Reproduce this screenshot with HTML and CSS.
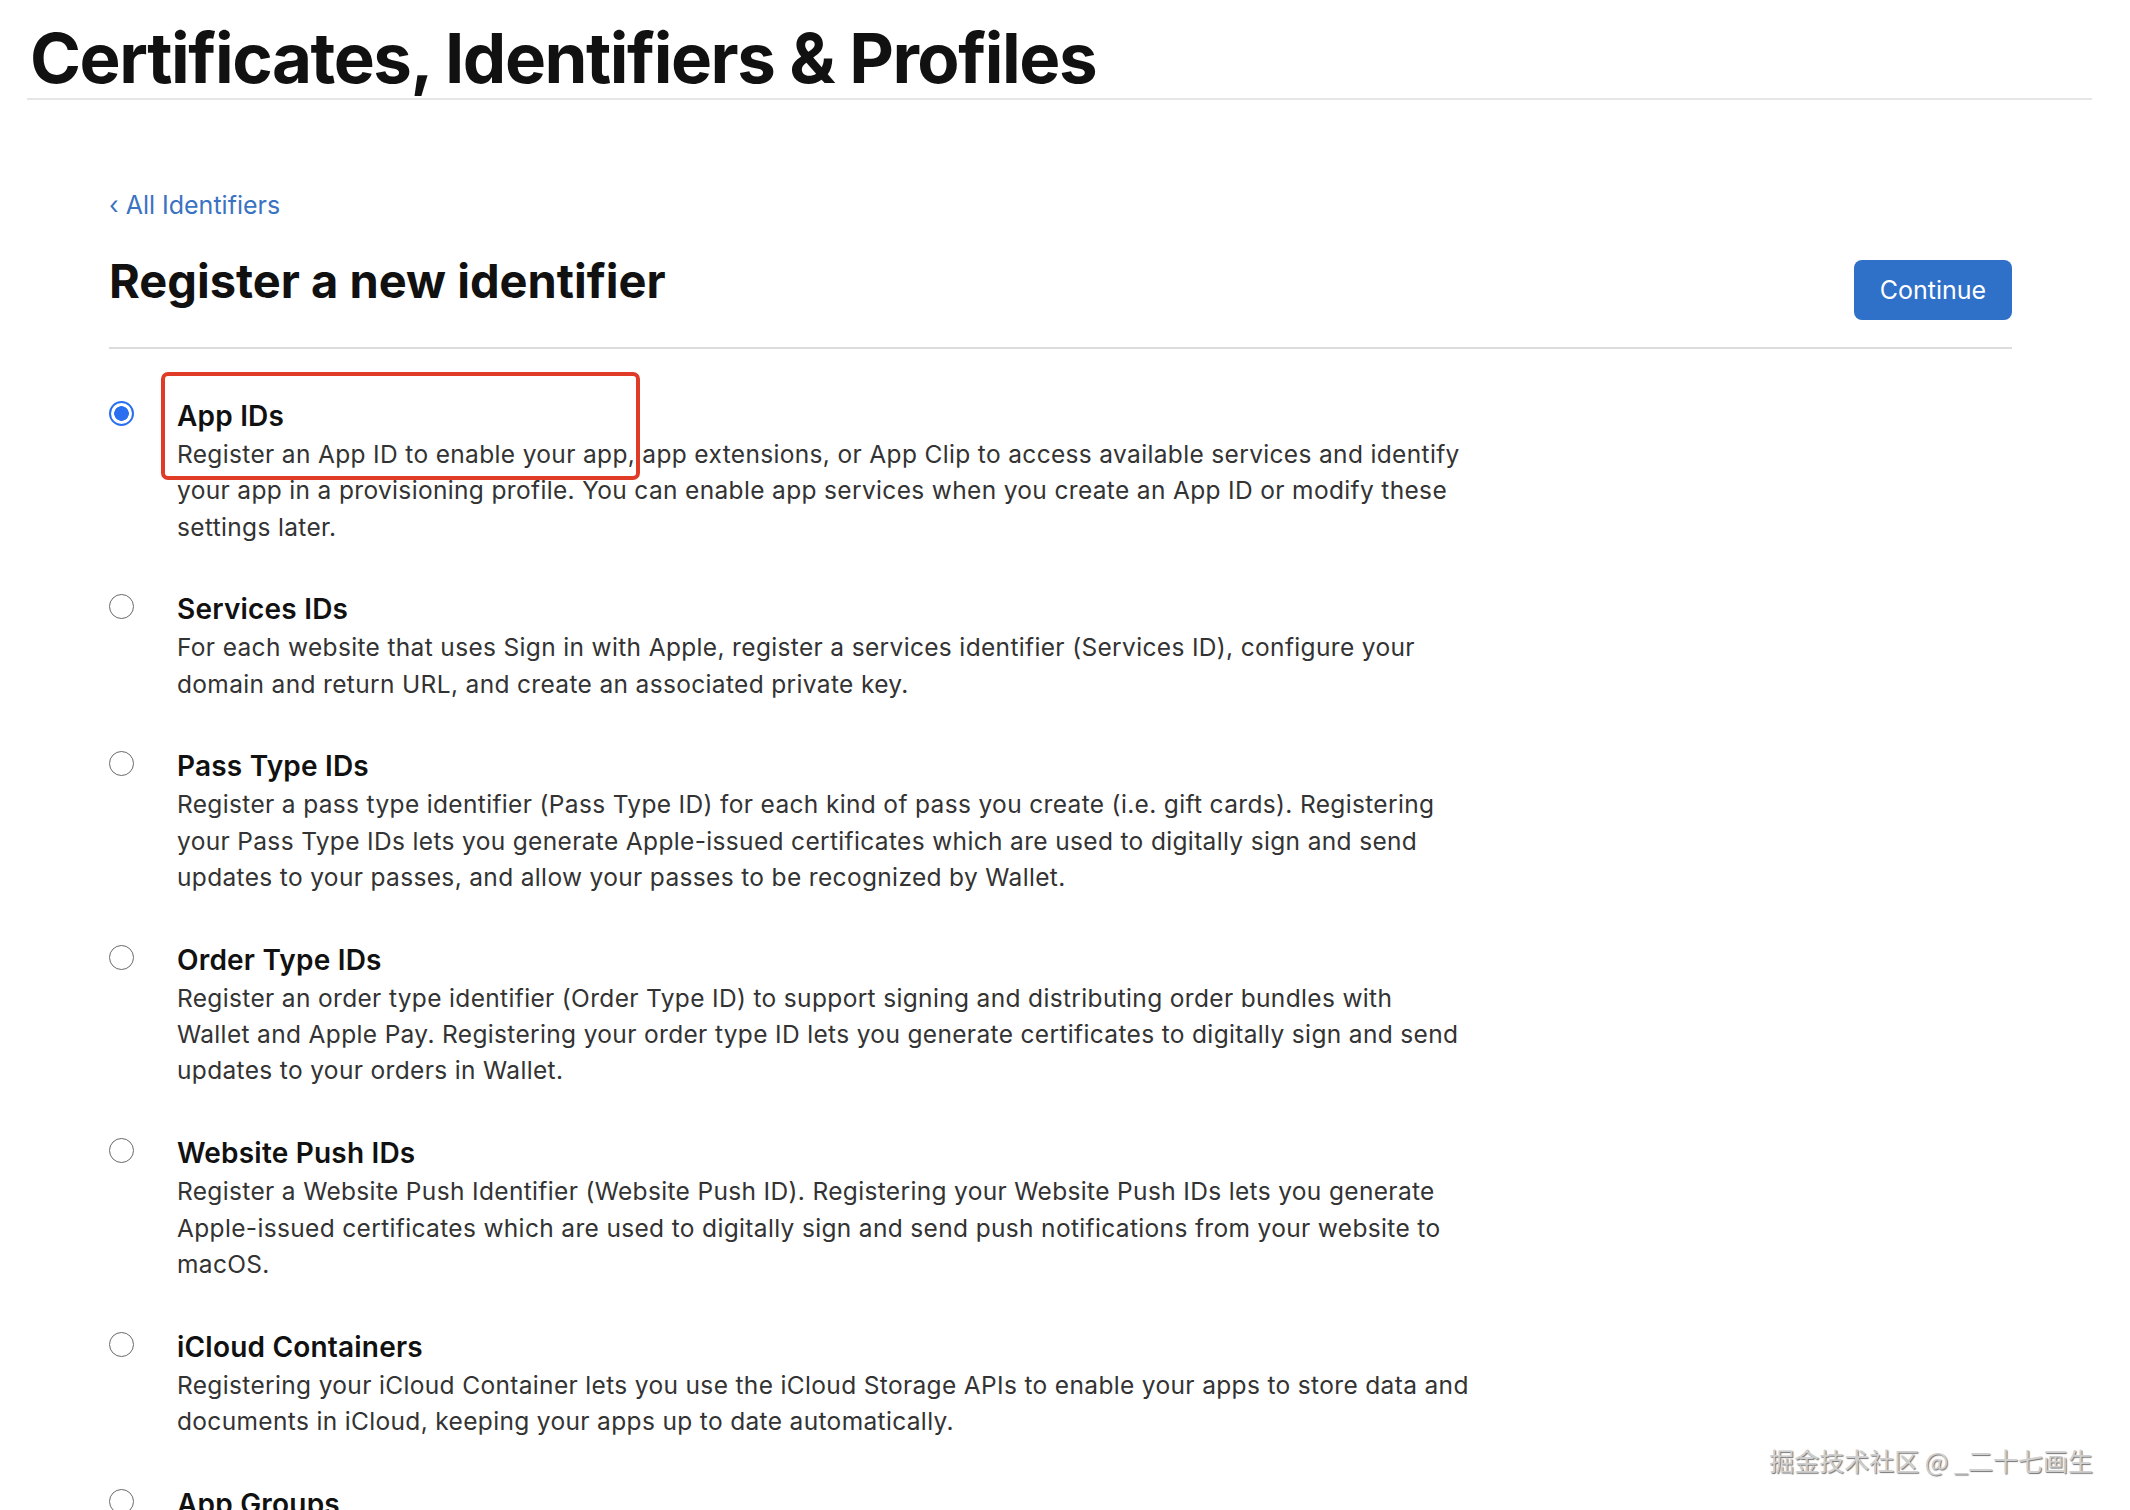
FILE: index.html
```html
<!DOCTYPE html>
<html lang="en">
<head>
<meta charset="utf-8">
<title>Certificates, Identifiers &amp; Profiles</title>
<link rel="stylesheet" href="styles.css">
</head>
<body>
  <header class="top">
    <h1 class="brand">Certificates, Identifiers &amp; Profiles</h1>
  </header>

  <main class="content">
    <a class="back" href="#">&#8249; All Identifiers</a>
    <div class="head-row">
      <h2 class="page-title">Register a new identifier</h2>
      <button class="btn-primary" type="button">Continue</button>
    </div>

    <ul class="options">
      <li class="option">
        <span class="radio checked"></span>
        <div class="opt-text">
          <div class="opt-name">App IDs</div>
          <p class="opt-desc">Register an App ID to enable your app, app extensions, or App Clip to access available services and identify<br>your app in a provisioning profile. You can enable app services when you create an App ID or modify these<br>settings later.</p>
        </div>
      </li>
      <li class="option">
        <span class="radio"></span>
        <div class="opt-text">
          <div class="opt-name">Services IDs</div>
          <p class="opt-desc">For each website that uses Sign in with Apple, register a services identifier (Services ID), configure your<br>domain and return URL, and create an associated private key.</p>
        </div>
      </li>
      <li class="option">
        <span class="radio"></span>
        <div class="opt-text">
          <div class="opt-name">Pass Type IDs</div>
          <p class="opt-desc">Register a pass type identifier (Pass Type ID) for each kind of pass you create (i.e. gift cards). Registering<br>your Pass Type IDs lets you generate Apple-issued certificates which are used to digitally sign and send<br>updates to your passes, and allow your passes to be recognized by Wallet.</p>
        </div>
      </li>
      <li class="option">
        <span class="radio"></span>
        <div class="opt-text">
          <div class="opt-name">Order Type IDs</div>
          <p class="opt-desc">Register an order type identifier (Order Type ID) to support signing and distributing order bundles with<br>Wallet and Apple Pay. Registering your order type ID lets you generate certificates to digitally sign and send<br>updates to your orders in Wallet.</p>
        </div>
      </li>
      <li class="option">
        <span class="radio"></span>
        <div class="opt-text">
          <div class="opt-name">Website Push IDs</div>
          <p class="opt-desc">Register a Website Push Identifier (Website Push ID). Registering your Website Push IDs lets you generate<br>Apple-issued certificates which are used to digitally sign and send push notifications from your website to<br>macOS.</p>
        </div>
      </li>
      <li class="option">
        <span class="radio"></span>
        <div class="opt-text">
          <div class="opt-name">iCloud Containers</div>
          <p class="opt-desc">Registering your iCloud Container lets you use the iCloud Storage APIs to enable your apps to store data and<br>documents in iCloud, keeping your apps up to date automatically.</p>
        </div>
      </li>
      <li class="option">
        <span class="radio"></span>
        <div class="opt-text">
          <div class="opt-name">App Groups</div>
          <p class="opt-desc">Register an App Group to allow apps to share data and access shared containers.</p>
        </div>
      </li>
    </ul>
  </main>

  <div class="annotation"></div>
  <div class="watermark">掘金技术社区 @ _二十七画生</div>
</body>
</html>
```

FILE: styles.css
```css
html, body {
  margin: 0;
  padding: 0;
  background: #ffffff;
  overflow: hidden;
}

body {
  position: relative;
  width: 2130px;
  height: 1510px;
  font-family: "Inter", "Liberation Sans", Arial, sans-serif;
  color: #1d1d1f;
}

.top {
  margin: 0 38px 0 27px;
  padding-top: 18px;
  border-bottom: 2px solid #e6e6e6;
}

.brand {
  margin: 0;
  padding-left: 3px;
  font-size: 69px;
  line-height: 80px;
  font-weight: 700;
  letter-spacing: -1.45px;
  color: #111111;
}

.content {
  margin: 0 118px 0 109px;
}

.back {
  display: block;
  margin-top: 90px;
  font-size: 25px;
  line-height: 30px;
  color: #3a73c2;
  text-decoration: none;
}

.head-row {
  display: flex;
  justify-content: space-between;
  align-items: flex-start;
  margin-top: 33px;
  padding-bottom: 27px;
  border-bottom: 2px solid #dcdcdc;
}

.page-title {
  margin: 0;
  font-size: 47px;
  line-height: 56px;
  font-weight: 700;
  letter-spacing: 0;
  color: #111111;
}

.btn-primary {
  margin-top: 7px;
  width: 158px;
  height: 60px;
  border: 0;
  border-radius: 8px;
  background: #2f70c9;
  color: #ffffff;
  font-family: "Inter", "Liberation Sans", Arial, sans-serif;
  font-size: 25px;
  padding: 0;
}

.options {
  list-style: none;
  margin: 47px 0 0 0;
  padding: 0;
}

.option {
  display: flex;
  align-items: flex-start;
  margin-bottom: 44.5px;
}

.radio {
  flex: 0 0 auto;
  box-sizing: border-box;
  width: 25px;
  height: 25px;
  margin-top: 5px;
  border: 1.7px solid #6a6a6a;
  border-radius: 50%;
  background: #fff;
}

.radio.checked {
  border: 2.5px solid #2a6ff0;
  background: radial-gradient(circle, #2a6ff0 0 7px, #ffffff 7.6px);
}

.opt-text {
  margin-left: 43px;
}

.opt-name {
  font-size: 28px;
  line-height: 40px;
  font-weight: 600;
  letter-spacing: 0.2px;
  color: #111111;
}

.opt-desc {
  margin: 0;
  font-size: 24.5px;
  line-height: 36.3px;
  letter-spacing: 0.34px;
  color: #333333;
  white-space: nowrap;
}

.annotation {
  position: absolute;
  left: 161px;
  top: 372px;
  width: 479px;
  height: 108px;
  box-sizing: border-box;
  border: 4px solid #e03b27;
  border-radius: 7px;
}

.watermark {
  position: absolute;
  right: 37px;
  top: 1443px;
  font-family: "Noto Sans CJK SC", sans-serif;
  font-size: 25px;
  line-height: 34px;
  color: #cfcfcf;
  text-shadow: 1px 1px 1px rgba(0, 0, 0, 0.55);
}
```
